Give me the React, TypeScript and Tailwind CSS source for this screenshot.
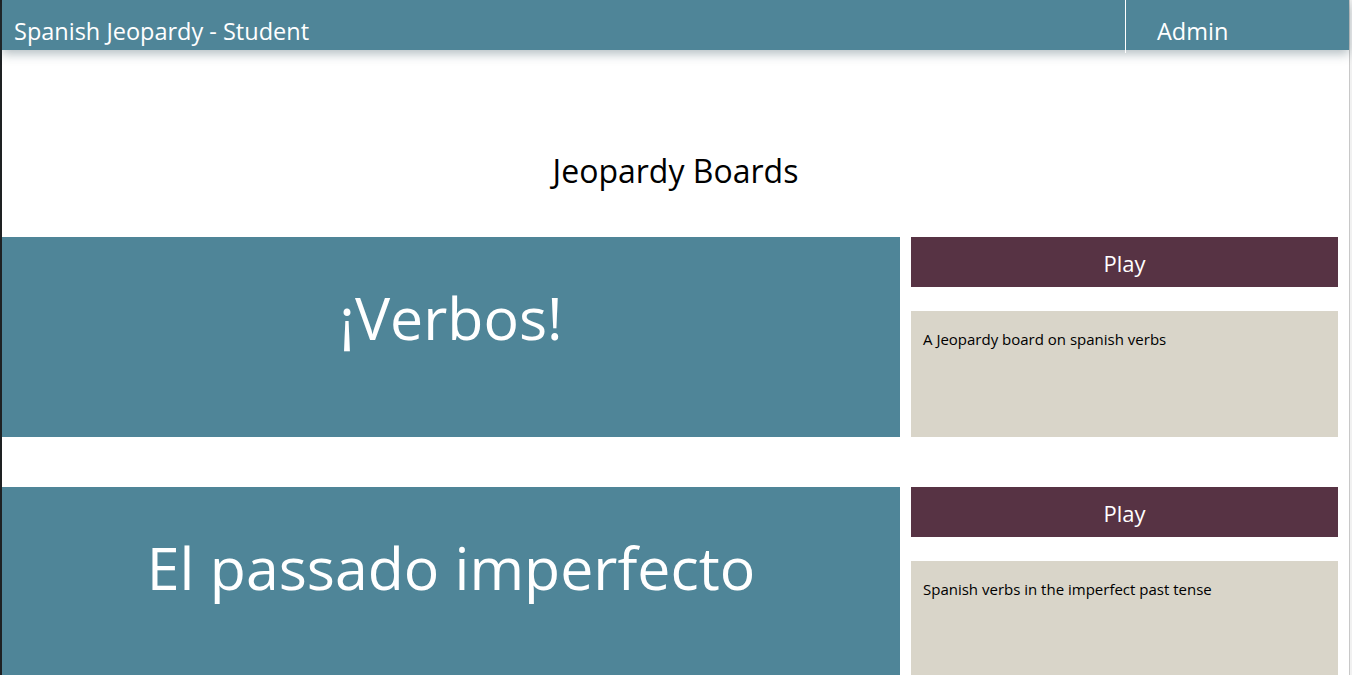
const boards = [
  { title: "¡Verbos!", desc: "A Jeopardy board on spanish verbs" },
  { title: "El passado imperfecto", desc: "Spanish verbs in the imperfect past tense" },
];

export default function App() {
  return (
    <div
      className="flex h-[675px] overflow-hidden bg-white"
      style={{ fontFamily: "'Open Sans', 'Noto Sans', sans-serif" }}
    >
      {/* window edge */}
      <div className="w-[2px] shrink-0 bg-[#1e2123]" />

      <div className="flex-1 min-w-0 flex flex-col">
        {/* Header */}
        <header className="relative z-10 flex h-[50px] shrink-0 bg-[#4f8598] text-white shadow-[0_4px_10px_rgba(40,70,80,0.35)]">
          <div className="flex-1 pl-3 pt-[14px] text-[23.5px] leading-[34px]">
            Spanish Jeopardy - Student
          </div>
          <div className="w-[224px] h-[53px] border-l border-white pl-[31px] pt-[14px] text-[23.5px] leading-[34px]">
            Admin
          </div>
        </header>

        {/* Title */}
        <h1 className="pt-[98px] pb-[43px] text-center text-[32px] leading-[46px] text-black">
          Jeopardy Boards
        </h1>

        {/* Boards */}
        <div className="flex flex-col gap-[50px]">
          {boards.map((b, i) => (
            <div key={i} className="flex h-[200px] shrink-0">
              <div className="w-2/3 bg-[#4f8598] pt-[50px] text-center text-[59px] leading-[60px] text-white">
                {b.title}
              </div>
              <div className="w-1/3 px-[11px] flex flex-col">
                <button className="h-[50px] w-full bg-[#573344] pt-[3px] text-[22px] text-white">
                  Play
                </button>
                <div className="mt-[24px] flex-1 bg-[#d9d5c9] px-3 pt-[17px] text-[15px] leading-[22px] text-black">
                  {b.desc}
                </div>
              </div>
            </div>
          ))}
        </div>
      </div>

      {/* scrollbar track */}
      <div className="w-[3px] shrink-0 border-l border-[#c8c8c8] bg-[#f1f1f1]" />
    </div>
  );
}
